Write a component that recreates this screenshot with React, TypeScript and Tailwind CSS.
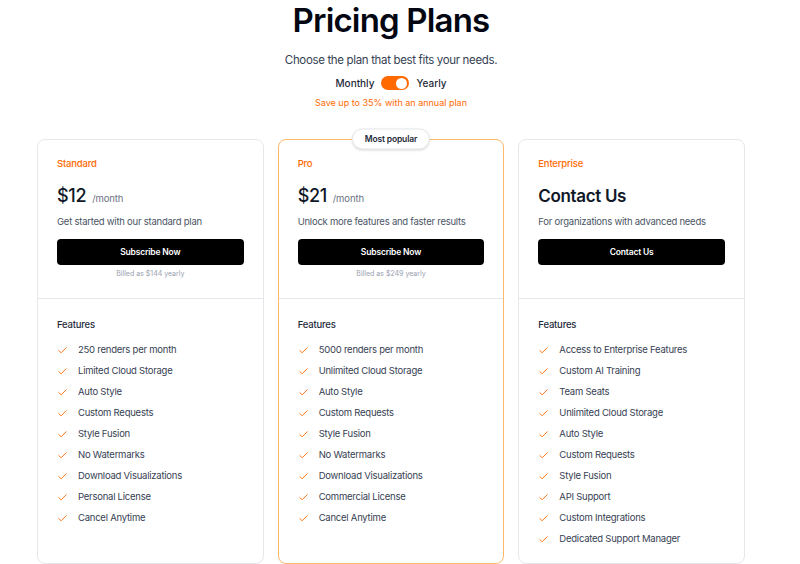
import { Check } from "lucide-react";

type Plan = {
  name: string;
  price?: string;
  heading?: string;
  blurb: string;
  cta: string;
  billed?: string;
  popular?: boolean;
  features: string[];
};

const plans: Plan[] = [
  {
    name: "Standard",
    price: "$12",
    blurb: "Get started with our standard plan",
    cta: "Subscribe Now",
    billed: "Billed as $144 yearly",
    features: [
      "250 renders per month",
      "Limited Cloud Storage",
      "Auto Style",
      "Custom Requests",
      "Style Fusion",
      "No Watermarks",
      "Download Visualizations",
      "Personal License",
      "Cancel Anytime",
    ],
  },
  {
    name: "Pro",
    price: "$21",
    blurb: "Unlock more features and faster results",
    cta: "Subscribe Now",
    billed: "Billed as $249 yearly",
    popular: true,
    features: [
      "5000 renders per month",
      "Unlimited Cloud Storage",
      "Auto Style",
      "Custom Requests",
      "Style Fusion",
      "No Watermarks",
      "Download Visualizations",
      "Commercial License",
      "Cancel Anytime",
    ],
  },
  {
    name: "Enterprise",
    heading: "Contact Us",
    blurb: "For organizations with advanced needs",
    cta: "Contact Us",
    features: [
      "Access to Enterprise Features",
      "Custom AI Training",
      "Team Seats",
      "Unlimited Cloud Storage",
      "Auto Style",
      "Custom Requests",
      "Style Fusion",
      "API Support",
      "Custom Integrations",
      "Dedicated Support Manager",
    ],
  },
];

const PlanCard = ({ plan }: { plan: Plan }) => {
  return (
    <div
      className={`relative flex flex-col rounded-lg border bg-white ${
        plan.popular ? "border-orange-300" : "border-gray-200"
      }`}
    >
      {plan.popular && (
        <div className="absolute left-1/2 -top-px flex h-[21px] -translate-x-1/2 -translate-y-1/2 items-center rounded-full border border-gray-200 bg-white px-3 text-[8.5px] font-semibold tracking-[-0.02em] text-gray-800 shadow-sm">
          Most popular
        </div>
      )}
      <div className="border-b border-gray-200 px-[19px] pt-4 pb-[18px]">
        <div className="text-[9.5px] leading-4 font-medium tracking-[-0.02em] text-orange-500">{plan.name}</div>
        {plan.price ? (
          <div className="mt-3 flex h-6 items-baseline gap-1.5">
            <span className="text-[18px] leading-6 font-medium tracking-[-0.02em] text-gray-900">{plan.price}</span>
            <span className="text-[9.5px] tracking-[-0.01em] text-gray-500">/month</span>
          </div>
        ) : (
          <div className="mt-3 h-6 text-[17px] leading-6 font-semibold tracking-[-0.02em] text-gray-900">{plan.heading}</div>
        )}
        <div className="mt-1.5 text-[9.5px] leading-4 tracking-[-0.025em] text-gray-600">{plan.blurb}</div>
        <button className="mt-[9px] h-[26px] w-full rounded bg-black text-[8.5px] font-semibold tracking-[-0.02em] text-white">
          {plan.cta}
        </button>
        <div className="mt-[3px] h-3 text-center text-[7px] leading-3 text-gray-400">{plan.billed}</div>
      </div>
      <div className="px-[19px] pt-[18px] pb-[13px]">
        <div className="text-[9.5px] leading-4 font-medium tracking-[-0.02em] text-gray-800">Features</div>
        <ul className="mt-[7px]">
          {plan.features.map((f) => (
            <li
              key={f}
              className="flex h-[21px] items-center gap-2.5 text-[9.5px] tracking-[-0.025em] text-gray-700"
            >
              <Check size={11} strokeWidth={2} className="shrink-0 text-orange-500" />
              {f}
            </li>
          ))}
        </ul>
      </div>
    </div>
  );
};

export default function App() {
  return (
    <div className="min-h-screen bg-white font-['Inter',sans-serif]">
      <div className="flex w-[782px] flex-col items-center">
        <h1 className="text-[33px] leading-10 font-semibold tracking-tight text-gray-950">Pricing Plans</h1>
        <p className="mt-2.5 text-[11.5px] leading-5 tracking-[-0.03em] text-gray-700">
          Choose the plan that best fits your needs.
        </p>
        <div className="mt-1 flex h-[18px] items-center gap-[7px] text-[10px] font-medium text-gray-800">
          <span>Monthly</span>
          <div className="flex h-[14px] w-[28px] items-center justify-end rounded-full bg-orange-500 px-[2px]">
            <div className="h-[11px] w-[11px] rounded-full bg-white" />
          </div>
          <span>Yearly</span>
        </div>
        <p className="mt-[3px] text-[9px] leading-4 text-orange-500">Save up to 35% with an annual plan</p>

        <div className="mt-[28px] grid w-[708px] grid-cols-3 gap-[14px]">
          {plans.map((p) => (
            <PlanCard key={p.name} plan={p} />
          ))}
        </div>
      </div>
    </div>
  );
}
